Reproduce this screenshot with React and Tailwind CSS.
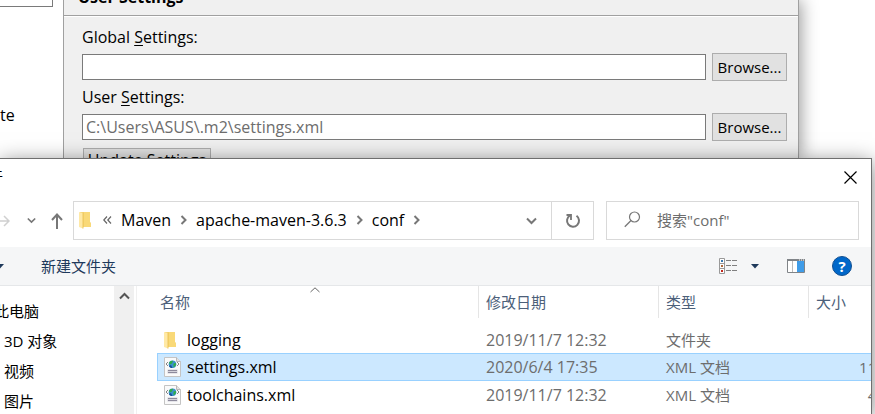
import React from "react";

const files = [
  { name: "logging", date: "2019/11/7 12:32", type: "文件夹", size: "", kind: "folder" },
  { name: "settings.xml", date: "2020/6/4 17:35", type: "XML 文档", size: "11 KB", kind: "xml", selected: true },
  { name: "toolchains.xml", date: "2019/11/7 12:32", type: "XML 文档", size: "4 KB", kind: "xml" },
];

function FolderIcon() {
  return (
    <svg width="13" height="18" viewBox="0 0 13 18" className="shrink-0" aria-hidden="true">
      <path d="M1 1h9.500v10.500h1.500V16H1z" fill="#f3cf6b" />
      <path d="M5 1h6v11h1v4H5z" fill="#f9d978" />
      <path d="M0 1l4 1v15.500L0 16z" fill="#ffe9a6" />
      <path d="M4 2v15.500" stroke="#eec75c" strokeWidth="1" />
    </svg>
  );
}

function XmlIcon() {
  return (
    <svg width="17" height="20" viewBox="0 0 17 20" className="shrink-0" aria-hidden="true">
      <path d="M.5.5h12l4 4v15H.5z" fill="#fafafa" stroke="#c4c4c4" />
      <path d="M12.500.5v4h4" fill="#e2e2e2" stroke="#b9b9b9" />
      <path d="M4 5L2 7l2 2M13 5l2 2-2 2" fill="none" stroke="#888" />
      <circle cx="8.500" cy="7.200" r="3.800" fill="#3b8fd0" />
      <path d="M5 6c1-2 3-2.500 4-2l-1 2.500-2 1zM9.500 6.500l2.500-.5c.3 2-1 4-2.500 4.500z" fill="#2fae44" />
      <path d="M5 9l2-1 1.500 3C6.500 11 5.500 10.500 5 9z" fill="#174f96" />
      <path d="M3.500 12.500h10v4h-10z" fill="#d3d2da" />
      <path d="M4 13.500h9M4 15.500h9" stroke="#8d8a9c" />
    </svg>
  );
}

function Chevron({ dir = "right", className = "" }) {
  const d = { right: "M1.500 1l4 4-4 4", down: "M1 2.500l4.500 4.500 4.500-4.500", up: "M1 7.500L5.500 3 10 7.500" }[dir];
  return (
    <svg width={dir === "right" ? 7 : 11} height="10" viewBox={dir === "right" ? "0 0 7 10" : "0 0 11 10"} className={className} aria-hidden="true">
      <path d={d} fill="none" stroke="currentColor" strokeWidth="2" />
    </svg>
  );
}

function SettingRow({ id, label, value }) {
  return (
    <div>
      <label htmlFor={id} className="block h-[34px] pt-[5px] leading-6">
        {label} <span className="underline underline-offset-2">S</span>ettings:
      </label>
      <div className="flex h-[26px] items-center gap-1.5">
        <input
          id={id}
          defaultValue={value}
          className="h-[26px] min-w-0 flex-1 border border-[#7a7a7a] bg-white px-[3px] text-[#6d6d6d] outline-none"
        />
        <button type="button" className="h-7 w-[75px] shrink-0 border border-[#adadad] bg-[#e1e1e1] text-[15px] whitespace-nowrap">
          Browse...
        </button>
      </div>
    </div>
  );
}

function Preferences() {
  return (
    <div className="flex h-[158px] shrink-0 overflow-hidden pr-[76px] text-base">
      <div className="flex min-w-0 flex-1 shadow-[2px_0_16px_rgba(0,0,0,0.4)]">
        <aside className="w-[63px] shrink-0 bg-white">
          <div className="h-[7px] w-[53px] border-r border-b border-[#7a7a7a]" />
          <p className="pt-24 leading-6">te</p>
        </aside>
        <section className="min-w-0 flex-1 border-x border-[#a0a0a0] bg-[#f0f0f0]">
          <header className="flex h-4 items-end border-b border-[#a0a0a0] pl-[14px]">
            <h1 className="mb-[6px] leading-6 font-bold">User Settings</h1>
          </header>
          <div className="border-t border-white pr-[11px] pl-[18px]">
            <div className="flex flex-col pt-[3px]">
              <SettingRow id="global" label="Global" value="" />
              <SettingRow id="user" label="User" value="C:\Users\ASUS\.m2\settings.xml" />
            </div>
            <button type="button" className="mt-2 ml-px h-6 w-32 border border-[#adadad] bg-[#e1e1e1] leading-5 whitespace-nowrap">
              Update Settings
            </button>
          </div>
        </section>
      </div>
    </div>
  );
}

function AddressRow() {
  return (
    <div className="flex h-[39px] pr-3">
      <div className="flex w-[73px] shrink-0 items-center text-[#777]">
        <button type="button" aria-label="前进" className="w-[27px] text-[#d0d0d0]">
          <svg width="10" height="12" viewBox="0 0 10 12">
            <path d="M0 6h8M4 1l5 5-5 5" fill="none" stroke="currentColor" strokeWidth="1.500" />
          </svg>
        </button>
        <button type="button" aria-label="最近位置" className="w-6">
          <Chevron dir="down" className="h-[9px] w-[9px]" />
        </button>
        <button type="button" aria-label="上移">
          <svg width="12" height="16" viewBox="0 0 12 16">
            <path d="M6 16V1.500M1 7l5-5.500L11 7" fill="none" stroke="currentColor" strokeWidth="2" />
          </svg>
        </button>
      </div>
      <div className="flex min-w-0 flex-1 border border-[#d9d9d9]">
        <nav className="flex min-w-0 flex-1 items-center pb-0.5 pl-[5px] text-base">
          <FolderIcon />
          <svg width="9" height="8" viewBox="0 0 9 8" className="ml-[11px] shrink-0" aria-hidden="true">
            <path d="M4 .5L.8 4 4 7.500M8 .5L4.800 4 8 7.500" fill="none" stroke="#666" strokeWidth="1.200" />
          </svg>
          <a href="#maven" className="ml-[9px]">Maven</a>
          <Chevron className="mx-[9px] shrink-0 text-[#777]" />
          <a href="#apache" className="whitespace-nowrap">apache-maven-3.6.3</a>
          <Chevron className="mx-[9px] shrink-0 text-[#777]" />
          <a href="#conf">conf</a>
          <Chevron className="ml-[9px] shrink-0 text-[#777]" />
        </nav>
        <button type="button" aria-label="历史记录" className="flex w-10 shrink-0 items-center justify-center text-[#777]">
          <Chevron dir="down" />
        </button>
        <button type="button" aria-label="刷新" className="flex w-[42px] shrink-0 items-center justify-center border-l border-[#d9d9d9]">
          <svg width="16" height="16" viewBox="0 0 16 16">
            <path d="M11.500 2.800A6 6 0 1 1 5 2.500" fill="none" stroke="#777" strokeWidth="2" />
            <path d="M1.500 2h4.500v5" fill="none" stroke="#777" strokeWidth="1.800" />
          </svg>
        </button>
      </div>
      <label className="ml-3 flex w-[253px] shrink-0 items-center border border-[#d9d9d9] pb-0.5 pl-[17px]">
        <svg width="17" height="17" viewBox="0 0 17 17" className="shrink-0" aria-hidden="true">
          <circle cx="10.500" cy="6" r="5" fill="none" stroke="#777" strokeWidth="1.200" />
          <path d="M7 9.500L.8 15.800" stroke="#777" strokeWidth="1.300" />
        </svg>
        <input
          type="text"
          aria-label="搜索"
          placeholder={'搜索"conf"'}
          className="ml-4 min-w-0 flex-1 bg-transparent outline-none placeholder:text-[#6d6d6d]"
        />
      </label>
    </div>
  );
}

function Triangle() {
  return (
    <svg width="8" height="5" viewBox="0 0 8 5" aria-hidden="true">
      <path d="M0 0h8L4 4.500z" fill="#1e395b" />
    </svg>
  );
}

function Toolbar() {
  return (
    <div className="mt-[7px] flex h-[39px] shrink-0 items-center border-b border-[#e5e7e9] bg-[#f5f6f7] pr-[19px] text-[#1e395b]">
      <button type="button" aria-label="组织" className="-ml-1 w-[45px] shrink-0">
        <Triangle />
      </button>
      <button type="button" className="whitespace-nowrap">新建文件夹</button>
      <button type="button" aria-label="更改视图" className="ml-auto flex items-center gap-[13px]">
        <svg width="19" height="16" viewBox="0 0 19 16">
          <path d="M.5.5h5v15h-5zM.5 5.500h5M.5 10.500h5" fill="#fff" stroke="#999" />
          <path d="M2 2h2v2H2z" fill="#3c7ab0" />
          <path d="M2 7h2v2H2z" fill="#b06a3c" />
          <path d="M2 12h2v2H2z" fill="#c2281e" />
          <path d="M7 2.500h5M13 2.500h5M7 7.500h5M13 7.500h5M7 12.500h5M13 12.500h5" stroke="#808080" />
        </svg>
        <Triangle />
      </button>
      <button type="button" aria-label="预览窗格" className="ml-7">
        <svg width="18" height="14" viewBox="0 0 18 14">
          <path d="M.5.5h17v13H.5z" fill="#fff" stroke="#808488" />
          <path d="M0 0h18v2H0z" fill="#808488" />
          <path d="M12 1h1M14 1h1M16 1h1" stroke="#fff" />
          <path d="M5.500 2v11" stroke="#bbb" />
          <path d="M10 2h7v11h-7z" fill="#3f9ce8" />
        </svg>
      </button>
      <button type="button" aria-label="帮助" className="ml-[27px] flex h-5 w-5 items-center justify-center rounded-full border border-[#114f91] bg-[#0067c9] font-bold text-white">
        ?
      </button>
    </div>
  );
}

function FileTable() {
  return (
    <div className="min-w-0 flex-1 overflow-hidden border-l border-[#f0f0f0] pl-5">
      <table className="w-[calc(100%+28px)] table-fixed border-separate border-spacing-0 text-left whitespace-nowrap">
        <colgroup>
          <col />
          <col className="w-[180px]" />
          <col className="w-[150px]" />
          <col className="w-[90px]" />
        </colgroup>
        <thead className="text-[#4c607a]">
          <tr>
            {["名称", "修改日期", "类型", "大小"].map((title, i) => (
              <th key={title} className="relative h-10 p-0 align-top font-normal">
                <span className={`flex h-8 items-center border-r border-[#e5e5e5] ${i === 0 ? "pl-[3px]" : "pl-[7px]"}`}>{title}</span>
                {i === 0 && (
                  <svg width="10" height="6" viewBox="0 0 10 6" className="absolute top-px left-[49%] -translate-x-1/2" aria-hidden="true">
                    <path d="M.5 5L5 .8 9.500 5" fill="none" stroke="#666" />
                  </svg>
                )}
              </th>
            ))}
          </tr>
        </thead>
        <tbody className="text-[#6d6d6d]">
          {files.map((f) => {
            const cell = f.selected ? "h-7 border-y border-[#99d1ff] bg-[#cce8ff] p-0" : "h-[27px] p-0";
            return (
              <tr key={f.name}>
                <td className={`${cell} text-base leading-5 text-black ${f.selected ? "border-l" : ""}`}>
                  <div className={`flex items-center ${f.selected ? "pl-1.5" : "pl-[7px]"}`}>
                    <span className="flex w-[23px]">{f.kind === "folder" ? <FolderIcon /> : <XmlIcon />}</span>
                    {f.name}
                  </div>
                </td>
                <td className={`${cell} pl-[7px] text-base leading-5`}>{f.date}</td>
                <td className={`${cell} pl-[7px]`}>{f.type}</td>
                <td className={`${cell} text-right`}>{f.size}</td>
              </tr>
            );
          })}
        </tbody>
      </table>
    </div>
  );
}

function FileDialog() {
  return (
    <div className="relative z-10 mr-[3px] flex min-h-0 flex-1 flex-col border-t border-r border-[#6f6f6f] bg-white shadow-[0_4px_20px_rgba(0,0,0,0.5)]">
      <div className="flex h-[42px] shrink-0 justify-between overflow-hidden pr-[14px]">
        <h2 className="-ml-3 pt-1 leading-6">件</h2>
        <button type="button" aria-label="关闭" className="h-9">
          <svg width="13" height="13" viewBox="0 0 13 13">
            <path d="M.5.5l12 12M12.500.5l-12 12" stroke="#000" strokeWidth="1.200" />
          </svg>
        </button>
      </div>
      <AddressRow />
      <Toolbar />
      <div className="flex min-h-0 flex-1 overflow-hidden">
        <ul className="w-[114px] shrink-0 overflow-hidden pt-2.5 leading-[30px] whitespace-nowrap">
          <li className="-ml-1.5">此电脑</li>
          <li className="pl-1">3D 对象</li>
          <li className="pl-1">视频</li>
          <li className="pl-1">图片</li>
        </ul>
        <div className="mr-0.5 flex w-5 shrink-0 justify-center bg-[#f0f0f0] pt-[5px] text-[#555]">
          <Chevron dir="up" />
        </div>
        <FileTable />
      </div>
    </div>
  );
}

export default function App() {
  return (
    <main className="flex h-screen flex-col overflow-hidden bg-white font-['Open_Sans','Noto_Sans_CJK_SC',sans-serif] text-[15px] leading-5 text-black">
      <Preferences />
      <FileDialog />
    </main>
  );
}
